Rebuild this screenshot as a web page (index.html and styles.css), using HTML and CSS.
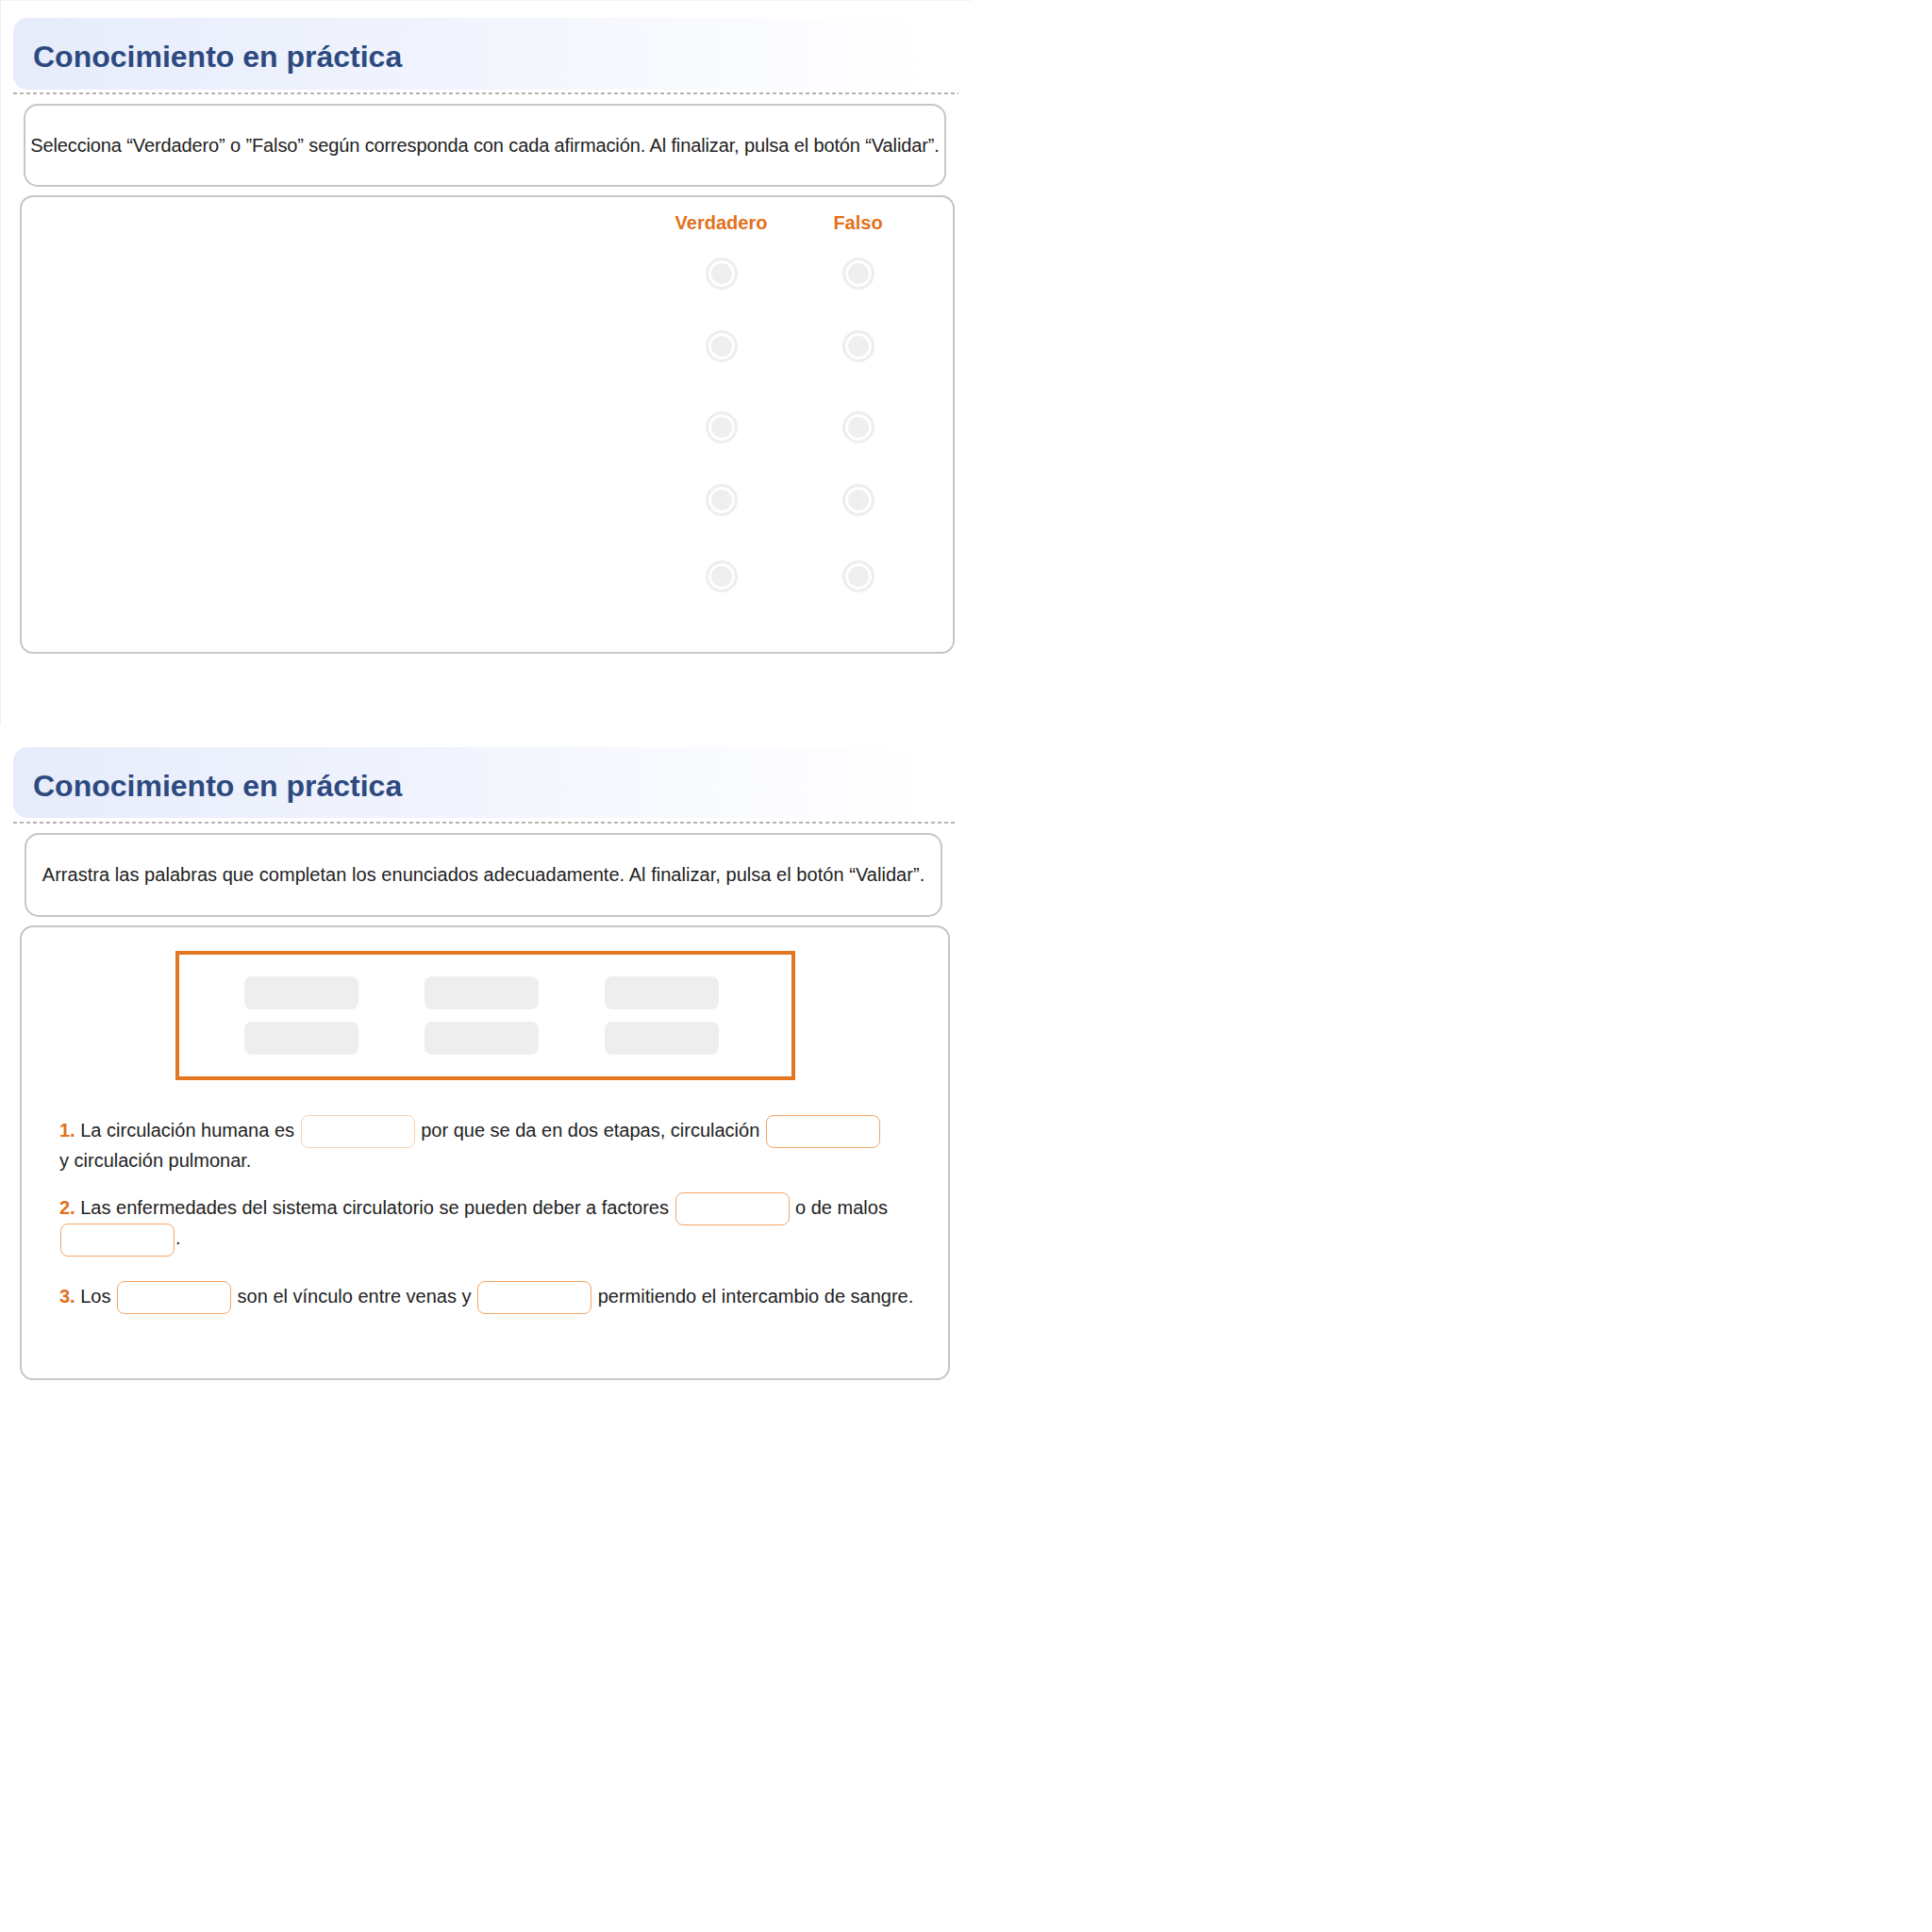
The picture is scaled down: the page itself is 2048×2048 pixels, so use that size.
FILE: index.html
```html
<!DOCTYPE html>
<html lang="es">
<head>
<meta charset="utf-8">
<title>Conocimiento en práctica</title>
<link rel="stylesheet" href="styles.css">
</head>
<body>
<div class="frame">
  <section class="activity act-tf">
    <div class="banner"><h2 class="banner-title">Conocimiento en práctica</h2></div>
    <div class="rule"></div>
    <div class="instr instr-tf">Selecciona “Verdadero” o ”Falso” según corresponda con cada afirmación. Al finalizar, pulsa el botón “Validar”.</div>
    <div class="panel panel-tf">
      <div class="tf-grid">
        <div class="tf-head"></div>
        <div class="tf-head col-label">Verdadero</div>
        <div class="tf-head col-label">Falso</div>

        <div class="tf-cell stmt r1"></div>
        <div class="tf-cell r1"><span class="radio"></span></div>
        <div class="tf-cell r1"><span class="radio"></span></div>

        <div class="tf-cell stmt r2"></div>
        <div class="tf-cell r2"><span class="radio"></span></div>
        <div class="tf-cell r2"><span class="radio"></span></div>

        <div class="tf-cell stmt r3"></div>
        <div class="tf-cell r3"><span class="radio"></span></div>
        <div class="tf-cell r3"><span class="radio"></span></div>

        <div class="tf-cell stmt r4"></div>
        <div class="tf-cell r4"><span class="radio"></span></div>
        <div class="tf-cell r4"><span class="radio"></span></div>

        <div class="tf-cell stmt r5"></div>
        <div class="tf-cell r5"><span class="radio"></span></div>
        <div class="tf-cell r5"><span class="radio"></span></div>
      </div>
    </div>
  </section>
</div>

<section class="activity act-drag">
  <div class="banner"><h2 class="banner-title">Conocimiento en práctica</h2></div>
  <div class="rule"></div>
  <div class="instr instr-drag">Arrastra las palabras que completan los enunciados adecuadamente. Al finalizar, pulsa el botón “Validar”.</div>
  <div class="panel panel-drag">
    <div class="bank">
      <span class="chip"></span><span class="chip"></span><span class="chip"></span>
      <span class="chip"></span><span class="chip"></span><span class="chip"></span>
    </div>
    <div class="sentences">
      <p class="sentence s1"><b class="num">1.</b> La circulación humana es <span class="blank blank-soft"></span> por que se da en dos etapas, circulación <span class="blank"></span><br>y circulación pulmonar.</p>
      <p class="sentence s2"><b class="num">2.</b> Las enfermedades del sistema circulatorio se pueden deber a factores <span class="blank"></span> o de malos <span class="blank"></span>.</p>
      <p class="sentence s3"><b class="num">3.</b> Los <span class="blank"></span> son el vínculo entre venas y <span class="blank"></span> permitiendo el intercambio de sangre.</p>
    </div>
  </div>
</section>
</body>
</html>
```

FILE: styles.css
```css
* { box-sizing: border-box; }

body {
  margin: 0;
  background: #ffffff;
  font-family: "Liberation Sans", Arial, sans-serif;
  color: #222222;
}

.frame {
  width: 1030px;
  padding: 18px 0 76px 13px;
  border-top: 1px solid #f4f4f4;
  border-left: 1px solid #f0f0f0;
  background: #ffffff;
}

.activity { margin-left: 14px; }
.act-tf { width: 1002px; margin-left: 0; }
.act-drag { width: 998px; margin-top: 23px; }

.banner {
  height: 76px;
  border-radius: 15px;
  background: linear-gradient(to right, #e6ecfb 0%, #f1f4fd 45%, #fbfcff 80%, #ffffff 98%);
}
.act-drag .banner { height: 75px; }

.banner-title {
  margin: 0;
  padding: 7px 0 0 21px;
  line-height: 68px;
  font-size: 32px;
  font-weight: bold;
  color: #2d4a80;
}

.rule {
  height: 2px;
  margin-top: 3px;
  background: repeating-linear-gradient(to right, #b3b3b3 0 4px, transparent 4px 7px);
}
.act-drag .rule { margin-top: 4px; }

.instr {
  display: flex;
  align-items: center;
  justify-content: center;
  margin-top: 10px;
  border: 2px solid #c6c6c6;
  border-radius: 15px;
  background: #ffffff;
  font-size: 20px;
  text-align: center;
  white-space: nowrap;
}
.instr-tf { margin-left: 11px; width: 978px; height: 88px; letter-spacing: -0.12px; }
.instr-drag { margin-left: 12px; width: 973px; height: 89px; letter-spacing: 0.04px; }

.panel {
  margin-top: 9px;
  margin-left: 7px;
  border: 2px solid #c6c6c6;
  border-radius: 14px;
  background: #ffffff;
}
.panel-tf { width: 991px; height: 486px; padding: 11px 28px 0 0; }
.panel-drag { width: 986px; height: 482px; padding-top: 25px; }

/* true/false grid */
.tf-grid {
  display: grid;
  grid-template-columns: 1fr 145px 145px;
}
.tf-head { height: 32px; }
.col-label {
  display: flex;
  align-items: center;
  justify-content: center;
  font-size: 20px;
  font-weight: bold;
  color: #e2711d;
}
.tf-cell {
  display: flex;
  justify-content: center;
  align-items: flex-start;
  padding-top: 21px;
}
.r1 { height: 77px; }
.r2 { height: 86px; }
.r3 { height: 77px; }
.r4 { height: 81px; }
.r5 { height: 82px; }

.radio {
  display: block;
  width: 34px;
  height: 34px;
  border-radius: 50%;
  border: 3px solid #eeeeee;
  background: #efefef;
  box-shadow: inset 0 0 0 3px #ffffff;
}

/* word bank */
.bank {
  width: 657px;
  height: 137px;
  margin: 0 auto;
  border: 4px solid #e37722;
  padding: 23px 0 0 69px;
  display: grid;
  grid-template-columns: repeat(3, 121px);
  grid-auto-rows: 35px;
  column-gap: 70px;
  row-gap: 13px;
  align-content: start;
}
.chip {
  display: block;
  border-radius: 8px;
  background: #eeeeee;
}

/* sentences */
.sentences { padding: 38px 30px 0 40px; }
.sentence {
  margin: 0;
  font-size: 20px;
  line-height: 31px;
  color: #222222;
}
.s1 { margin-bottom: 19px; }
.s2 { margin-bottom: 29px; }

.num { color: #e2711d; font-weight: bold; }

.blank {
  display: inline-block;
  width: 121px;
  height: 35px;
  margin: -2px 1px;
  vertical-align: middle;
  border: 1px solid #f2a566;
  border-radius: 8px;
  background: #ffffff;
}
.blank-soft { border-color: #f5d3b6; }
```
